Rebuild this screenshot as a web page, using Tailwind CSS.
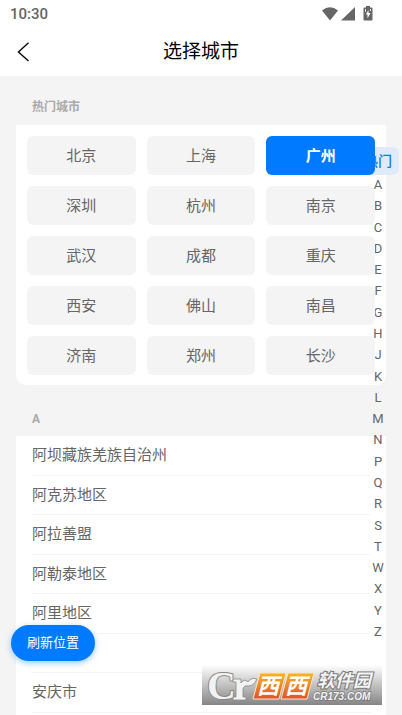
<!DOCTYPE html>
<html lang="zh-CN">
<head>
<meta charset="utf-8">
<meta name="viewport" content="width=device-width, initial-scale=1">
<title>选择城市</title>
<script src="https://cdn.jsdelivr.net/npm/@tailwindcss/browser@4"></script>
</head>
<body class="relative flex h-screen flex-col overflow-hidden bg-[#f4f4f4] font-['Roboto','Noto_Sans_CJK_SC',sans-serif] text-[#666]">
  <header class="shrink-0 bg-white">
    <div class="flex h-7 items-center justify-between pl-2.5 pr-7">
      <time class="text-[15px] leading-7 font-medium">10:30</time>
      <div class="flex items-center" aria-hidden="true">
        <svg class="h-4 w-4" viewBox="0 0 16 16" fill="#666"><path d="M0 4.500Q8-2 16 4.500L8 14.500Z"/></svg>
        <svg class="ml-0.5 h-4 w-4" viewBox="0 0 16 16" fill="#666"><path d="M15 1V14.500H1Z"/></svg>
        <svg class="ml-1.5 h-4 w-3" viewBox="0 0 12 16"><path d="M2.500 1.500H4V0H8V1.500H9.500Q10.500 1.500 10.500 2.500V13.500Q10.500 14.500 9.500 14.500H2.500Q1.500 14.500 1.500 13.500V2.500Q1.500 1.500 2.500 1.500Z" fill="#666"/><path d="M6.500 4L3.800 8.500H5.500V12.500L8.500 7H6.500Z" fill="#fff"/><path d="M3.500 3V6M8.500 3V5" stroke="#fff" stroke-width=".8"/></svg>
      </div>
    </div>
    <div class="grid h-12 grid-cols-[48px_1fr_48px] items-center">
      <a href="#" aria-label="返回" class="flex h-12 items-center pl-4"><svg class="h-5 w-4" viewBox="0 0 16 20" fill="none" stroke="#111" stroke-width="1.500"><path d="M12.500 .8L2.500 10L12.500 19"/></svg></a>
      <h1 class="text-center text-[19px] leading-12 text-black">选择城市</h1>
    </div>
  </header>

  <main class="min-h-0 flex-1 overflow-hidden px-4">
    <section>
      <h2 class="h-[49px] pl-4 pt-[21px] text-xs leading-5 font-bold text-[#aaa]">热门城市</h2>
      <div class="grid grid-cols-3 gap-[11px] rounded-b-[10px] bg-white px-[11px] pt-[11px] pb-2.5 text-[15px]">
        <button class="relative z-20 h-[39px] rounded-md bg-[#f4f4f4] pt-px">北京</button>
        <button class="relative z-20 h-[39px] rounded-md bg-[#f4f4f4] pt-px">上海</button>
        <button class="relative z-20 h-[39px] rounded-md bg-[#007aff] pt-px font-bold text-white">广州</button>
        <button class="relative z-20 h-[39px] rounded-md bg-[#f4f4f4] pt-px">深圳</button>
        <button class="relative z-20 h-[39px] rounded-md bg-[#f4f4f4] pt-px">杭州</button>
        <button class="relative z-20 h-[39px] rounded-md bg-[#f4f4f4] pt-px">南京</button>
        <button class="relative z-20 h-[39px] rounded-md bg-[#f4f4f4] pt-px">武汉</button>
        <button class="relative z-20 h-[39px] rounded-md bg-[#f4f4f4] pt-px">成都</button>
        <button class="relative z-20 h-[39px] rounded-md bg-[#f4f4f4] pt-px">重庆</button>
        <button class="relative z-20 h-[39px] rounded-md bg-[#f4f4f4] pt-px">西安</button>
        <button class="relative z-20 h-[39px] rounded-md bg-[#f4f4f4] pt-px">佛山</button>
        <button class="relative z-20 h-[39px] rounded-md bg-[#f4f4f4] pt-px">南昌</button>
        <button class="relative z-20 h-[39px] rounded-md bg-[#f4f4f4] pt-px">济南</button>
        <button class="relative z-20 h-[39px] rounded-md bg-[#f4f4f4] pt-px">郑州</button>
        <button class="relative z-20 h-[39px] rounded-md bg-[#f4f4f4] pt-px">长沙</button>
      </div>
    </section>
    <section>
      <h2 class="h-[51px] pl-4 pt-6 text-xs leading-5 font-bold text-[#aaa]">A</h2>
      <ul class="bg-white px-4 text-[15px] leading-[39px]">
        <li class="h-10 border-b border-[#f4f4f4]">阿坝藏族羌族自治州</li>
        <li class="h-[39px] border-b border-[#f4f4f4]">阿克苏地区</li>
        <li class="h-10 border-b border-[#f4f4f4]">阿拉善盟</li>
        <li class="h-[39px] border-b border-[#f4f4f4]">阿勒泰地区</li>
        <li class="h-10 border-b border-[#f4f4f4]">阿里地区</li>
        <li class="h-[39px] border-b border-[#f4f4f4]"></li>
        <li class="h-10 border-b border-[#f4f4f4]">安庆市</li>
        <li class="h-10"></li>
      </ul>
    </section>
  </main>

  <nav aria-label="城市索引" class="absolute top-[147px] right-[3px] z-10 flex h-[495px] w-[42px] flex-col text-center text-[13px]">
    <a href="#" class="h-7 shrink-0 rounded-md bg-[#dfebf9] text-sm leading-7 font-medium text-[#007aff]">热门</a>
    <div class="flex flex-1 flex-col justify-between leading-5">
      <a href="#">A</a><a href="#">B</a><a href="#">C</a><a href="#">D</a><a href="#">E</a><a href="#">F</a><a href="#">G</a><a href="#">H</a><a href="#">J</a><a href="#">K</a><a href="#">L</a><a href="#">M</a><a href="#">N</a><a href="#">P</a><a href="#">Q</a><a href="#">R</a><a href="#">S</a><a href="#">T</a><a href="#">W</a><a href="#">X</a><a href="#">Y</a><a href="#">Z</a>
    </div>
  </nav>

  <button class="absolute bottom-[54px] left-[11px] z-30 h-9 rounded-full bg-[#007aff] px-4 text-[13px] text-white shadow-[0_2px_6px_#007aff66]">刷新位置</button>

  <svg class="absolute right-5 bottom-2.5 z-30 h-10 w-[180px]" viewBox="0 0 180 40" role="img" aria-label="西西软件园 CR173.COM">
    <defs>
      <linearGradient id="plate" x2="0" y2="1"><stop offset="0" stop-color="#fff"/><stop offset="1" stop-color="#858585"/></linearGradient>
      <linearGradient id="orange" x2="0" y2="1"><stop offset="0" stop-color="#f9b522"/><stop offset="1" stop-color="#e2512b"/></linearGradient>
    </defs>
    <path fill="url(#plate)" d="M0 0H180V40H0Z"/>
    <text x="5" y="34" font-family="Liberation Serif" font-weight="bold" font-size="40" fill="#f2f2f2" stroke="#888" stroke-width="2" paint-order="stroke">C</text>
    <path d="M31 14H39V18Q42 13 46 17Q49 12 55 14Q52 21 46 21Q42 20 41 24V32H44V35H31V32H34V17H31Z" fill="#f2f2f2" stroke="#888" stroke-width=".8"/>
    <g fill="url(#orange)" stroke="#fbe7c7"><path d="M58 8H84L77 34H51Z"/><path d="M86 8H112L105 34H79Z"/></g>
    <g font-family="Noto Sans CJK SC" font-weight="bold" font-style="italic" fill="#fff">
      <text x="55" y="29" font-size="22">西</text><text x="83" y="29" font-size="22">西</text>
      <text x="115" y="22" font-size="18" fill="#f4f4f4" stroke="#777" stroke-width="2" paint-order="stroke">软件园</text>
    </g>
    <text x="111" y="35" font-family="Liberation Sans" font-style="italic" font-weight="bold" font-size="10" fill="#f4f4f4" stroke="#777" stroke-width="1.500" paint-order="stroke">CR173.COM</text>
  </svg>
</body>
</html>
